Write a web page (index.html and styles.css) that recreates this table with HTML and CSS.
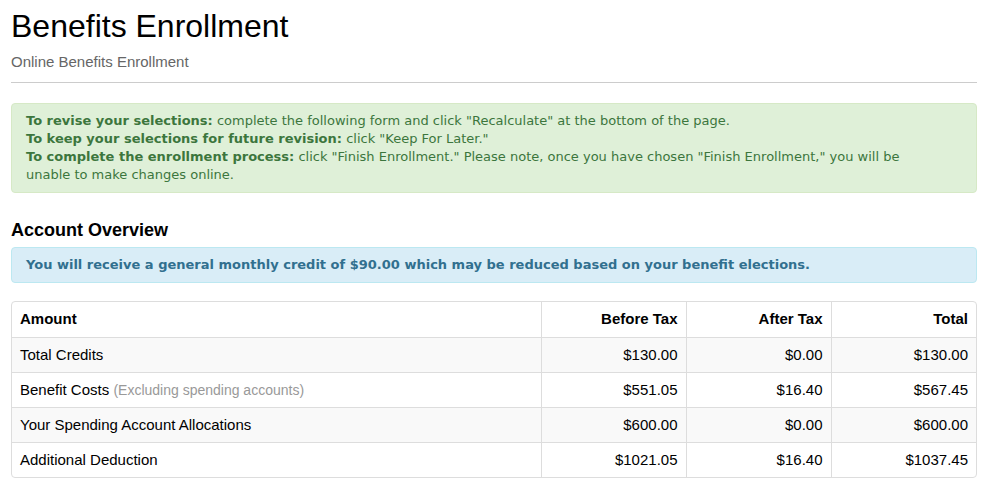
FILE: index.html
```html
<!DOCTYPE html>
<html>
<head>
<meta charset="utf-8">
<link rel="stylesheet" href="styles.css">
</head>
<body>
<div class="page">
  <div class="page-header">
    <h1 class="title">Benefits Enrollment</h1>
    <p class="subtitle">Online Benefits Enrollment</p>
  </div>
  <div class="alert alert-success">
    <b>To revise your selections:</b> complete the following form and click "Recalculate" at the bottom of the page.<br>
    <b>To keep your selections for future revision:</b> click "Keep For Later."<br>
    <b>To complete the enrollment process:</b> click "Finish Enrollment." Please note, once you have chosen "Finish Enrollment," you will be unable to make changes online.
  </div>
  <h2 class="section-title">Account Overview</h2>
  <div class="alert alert-info"><b>You will receive a general monthly credit of $90.00 which may be reduced based on your benefit elections.</b></div>
  <div class="table-wrap">
    <table class="overview">
      <colgroup>
        <col class="c1"><col class="c2"><col class="c3"><col class="c4">
      </colgroup>
      <thead>
        <tr><th>Amount</th><th class="num">Before Tax</th><th class="num">After Tax</th><th class="num">Total</th></tr>
      </thead>
      <tbody>
        <tr class="odd"><td>Total Credits</td><td class="num">$130.00</td><td class="num">$0.00</td><td class="num">$130.00</td></tr>
        <tr><td>Benefit Costs <span class="muted">(Excluding spending accounts)</span></td><td class="num">$551.05</td><td class="num">$16.40</td><td class="num">$567.45</td></tr>
        <tr class="odd"><td>Your Spending Account Allocations</td><td class="num">$600.00</td><td class="num">$0.00</td><td class="num">$600.00</td></tr>
        <tr><td>Additional Deduction</td><td class="num">$1021.05</td><td class="num">$16.40</td><td class="num">$1037.45</td></tr>
      </tbody>
    </table>
  </div>
</div>
</body>
</html>
```
FILE: styles.css
```css
* { box-sizing: border-box; }
body {
  margin: 0;
  font-family: "Liberation Sans", Arial, sans-serif;
  color: #000;
  background: #fff;
}
.page {
  padding: 0 19px 0 11px;
}
.page-header {
  border-bottom: 1px solid #ccc;
  padding-top: 8px;
  padding-bottom: 11px;
  margin-bottom: 20px;
}
.title {
  margin: 0;
  font-size: 32px;
  font-weight: normal;
  line-height: 36px;
}
.subtitle {
  margin: 9px 0 0;
  font-size: 15px;
  line-height: 18px;
  color: #666;
}
.alert {
  border: 1px solid transparent;
  border-radius: 4px;
  font-family: "DejaVu Sans", Verdana, sans-serif;
  font-size: 13px;
}
.alert-success {
  background: #dff0d8;
  border-color: #d6e9c6;
  color: #3c763d;
  padding: 8px 50px 8px 14px;
  line-height: 18px;
}
.alert-info {
  background: #d9edf7;
  border-color: #bce8f1;
  color: #31708f;
  padding: 9px 14px;
  line-height: 16px;
}
.section-title {
  margin: 26px 0 6px;
  font-size: 18px;
  line-height: 22px;
  font-weight: bold;
}
.table-wrap {
  margin-top: 18px;
  border: 1px solid #ddd;
  border-radius: 4px;
  overflow: hidden;
}
.overview {
  width: 100%;
  border-collapse: collapse;
  font-size: 15px;
}
.c1 { width: 529px; }
.c2 { width: 145px; }
.c3 { width: 145px; }
.overview th, .overview td {
  padding: 8px;
  height: 35px;
  text-align: left;
  border-left: 1px solid #ddd;
  border-top: 1px solid #ddd;
  line-height: 18px;
}
.overview th:first-child, .overview td:first-child { border-left: none; }
.overview thead th { border-top: none; font-weight: bold; }
.overview .num { text-align: right; }
.overview tr.odd td { background: #f9f9f9; }
.muted { color: #999; font-size: 14px; }
```
